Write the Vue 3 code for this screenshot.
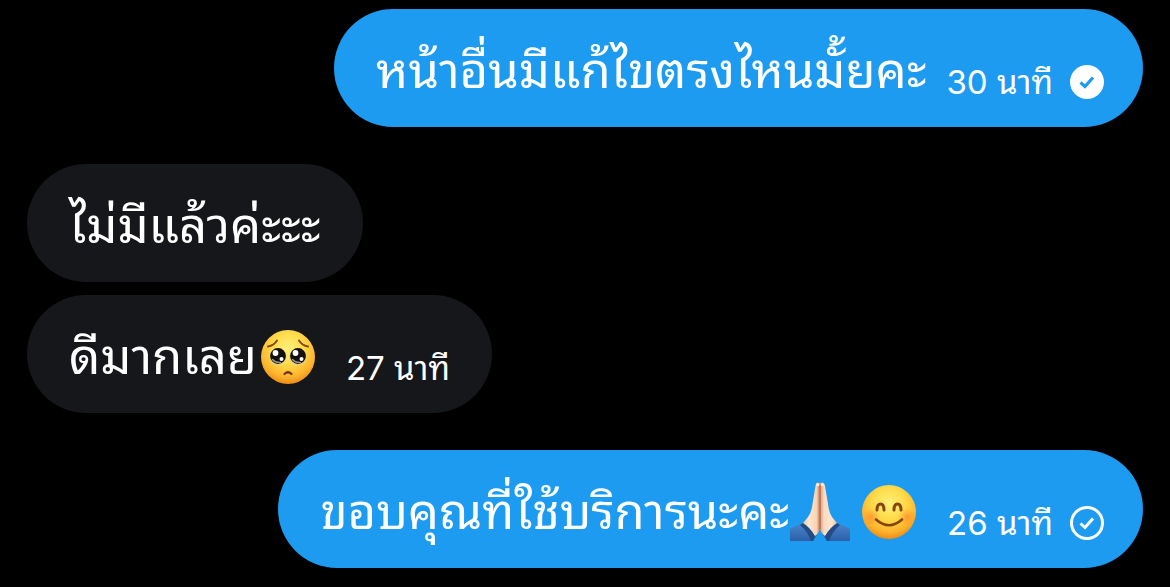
<script setup>
const messages = [
  { id: 1, own: true, text: 'หน้าอื่นมีแก้ไขตรงไหนมั้ยคะ', emoji: [], time: '30 นาที', status: 'read' },
  { id: 2, own: false, text: 'ไม่มีแล้วค่ะะะ', emoji: [] },
  { id: 3, own: false, text: 'ดีมากเลย', emoji: ['pleading'], time: '27 นาที' },
  { id: 4, own: true, text: 'ขอบคุณที่ใช้บริการนะคะ', emoji: ['pray', 'smile'], time: '26 นาที', status: 'sent' },
]
</script>

<template>
  <main class="chat">
    <svg class="defs" width="0" height="0" aria-hidden="true">
      <defs>
        <radialGradient id="face" cx="50%" cy="34%" r="66%">
          <stop offset="0" stop-color="#fff07a" />
          <stop offset="0.45" stop-color="#ffdb4a" />
          <stop offset="0.8" stop-color="#fdb32c" />
          <stop offset="1" stop-color="#ec8c17" />
        </radialGradient>
        <radialGradient id="blush">
          <stop offset="0" stop-color="#ff6a2a" stop-opacity="0.5" />
          <stop offset="1" stop-color="#ff7a2a" stop-opacity="0" />
        </radialGradient>
        <linearGradient id="handLeft">
          <stop offset="0" stop-color="#f3c39c" />
          <stop offset="0.35" stop-color="#ffe6cf" />
          <stop offset="0.8" stop-color="#fbd3b2" />
          <stop offset="1" stop-color="#b9775a" />
        </linearGradient>
        <linearGradient id="handRight">
          <stop offset="0" stop-color="#d99d78" />
          <stop offset="0.25" stop-color="#fddcc0" />
          <stop offset="0.7" stop-color="#ffe6cf" />
          <stop offset="1" stop-color="#eeb890" />
        </linearGradient>
        <linearGradient id="sleeve" x1="0" y1="0" x2="0" y2="1">
          <stop offset="0" stop-color="#4a86cb" />
          <stop offset="1" stop-color="#2b60a8" />
        </linearGradient>
      </defs>
    </svg>

    <div v-for="m in messages" :key="m.id" class="row" :class="{ own: m.own }">
      <article class="bubble">
        <p class="text">
          <span>{{ m.text }}</span>
          <template v-for="e in m.emoji" :key="e">
            <svg v-if="e === 'pleading'" class="emoji" viewBox="0 0 60 60" role="img" aria-label="🥺">
              <circle cx="30" cy="30" r="27" fill="url(#face)" />
              <path d="M10 19.500Q16 18.500 19 13.500M50 19.500Q44 18.500 41 13.500" fill="none" stroke="#8a4a0c" stroke-width="2" stroke-linecap="round" />
              <circle cx="20" cy="29.500" r="8.500" fill="#e2cf9a" />
              <circle cx="40" cy="29.500" r="8.500" fill="#e2cf9a" />
              <circle cx="20" cy="29" r="7.900" fill="#15100d" />
              <circle cx="40" cy="29" r="7.900" fill="#15100d" />
              <circle cx="17.500" cy="26" r="2.900" fill="#fff" />
              <circle cx="37.500" cy="26" r="2.900" fill="#fff" />
              <circle cx="23.500" cy="32" r="2" fill="#fff" />
              <circle cx="43.500" cy="32" r="2" fill="#fff" />
              <path d="M14.500 32.500Q17.500 36 22.500 35.500M34.500 32.500Q37.500 36 42.500 35.500" fill="none" stroke="#9c9791" stroke-width="1.400" stroke-linecap="round" />
              <path d="M26.500 47Q30 43.500 33.500 47" fill="none" stroke="#70350c" stroke-width="2.200" stroke-linecap="round" />
            </svg>
            <svg v-else-if="e === 'pray'" class="emoji" viewBox="0 0 60 60" role="img" aria-label="🙏🏻">
              <path d="M0 47Q7 43 13 41L27 53L23 59H0Z" fill="url(#sleeve)" />
              <path d="M60 47Q53 43 47 41L33 53L37 59H60Z" fill="url(#sleeve)" />
              <path d="M13 41Q20 46 25 54L23 59H21Q18 50 10 43ZM47 41Q40 46 35 54L37 59H39Q42 50 50 43Z" fill="#234b86" />
              <path d="M30 1Q26 -1 25.500 4L22.500 22Q21.500 31 18 35L13 41Q20 45 25 54Q30 50 30 46Z" fill="url(#handLeft)" />
              <path d="M30 1Q34 -1 35 4L38 22Q39 31 42 35L47 41Q40 45 35 54Q30 50 30 46Z" fill="url(#handRight)" />
              <path d="M26.500 2.500Q28 0 29.300 2V4H26.500ZM31 2Q33 0 34 3V4H31Z" fill="#fff1e8" />
              <path d="M30.200 3V47" stroke="#a9684d" stroke-width="1" />
            </svg>
            <svg v-else class="emoji" viewBox="0 0 60 60" role="img" aria-label="😊">
              <circle cx="30" cy="30" r="27" fill="url(#face)" />
              <circle cx="12" cy="35" r="9" fill="url(#blush)" />
              <circle cx="48" cy="35" r="9" fill="url(#blush)" />
              <path d="M18 28Q18 22 21.500 22T25 28M35 28Q35 22 38.500 22T42 28" fill="none" stroke="#84460c" stroke-width="3" stroke-linecap="round" />
              <path d="M17 37.500Q30 49 43 37.500" fill="none" stroke="#84460c" stroke-width="2.600" stroke-linecap="round" />
            </svg>
          </template>
        </p>
        <div v-if="m.time" class="meta">
          <time>{{ m.time }}</time>
          <svg v-if="m.status === 'read'" class="status" viewBox="0 0 34 34" aria-hidden="true">
            <circle cx="17" cy="17" r="17" fill="#fff" />
            <path d="M10.500 17.500L15 21.500L23 12.500" fill="none" stroke="#1d9bf0" stroke-width="3.200" />
          </svg>
          <svg v-else-if="m.status" class="status" viewBox="0 0 34 34" aria-hidden="true">
            <circle cx="17" cy="17" r="15.500" fill="none" stroke="#fff" stroke-width="3" />
            <path d="M10.500 17.500L15 21.500L23 12.500" fill="none" stroke="#fff" stroke-width="3" />
          </svg>
        </div>
      </article>
    </div>
  </main>
</template>

<style>
body {
  margin: 0;
  background: #000;
}
</style>

<style scoped>
.chat {
  padding: 9px 27px 18px;
  font-family: "Noto Sans Thai Looped", "Noto Looped Thai", "Loma", "Noto Sans Thai", "Noto Sans", Inter, sans-serif;
  color: #fff;
}
.defs {
  position: absolute;
}
.row {
  display: flex;
}
.row + .row {
  margin-top: 37px;
}
.row:not(.own) + .row:not(.own) {
  margin-top: 13px;
}
.own {
  justify-content: flex-end;
}
.bubble {
  display: flex;
  align-items: center;
  gap: 20px;
  height: 118px;
  padding: 0 42px;
  border-radius: 59px;
  box-sizing: border-box;
  background: #16171a;
  white-space: nowrap;
}
.own .bubble {
  padding-right: 39px;
  background: #1d9bf0;
}
.text {
  display: flex;
  align-items: center;
  margin: 0;
  padding-bottom: 4px;
  font-size: 49px;
  line-height: 72px;
}
.emoji {
  width: 60px;
  height: 60px;
  margin: 10px 8px 0 1px;
}
.meta {
  display: flex;
  align-items: center;
  gap: 17px;
  padding-top: 27px;
  font-family: Inter, "Noto Sans Thai Looped", "Loma", "Noto Sans Thai", sans-serif;
  font-size: 33px;
  line-height: 40px;
}
.status {
  width: 34px;
  height: 34px;
}
</style>
